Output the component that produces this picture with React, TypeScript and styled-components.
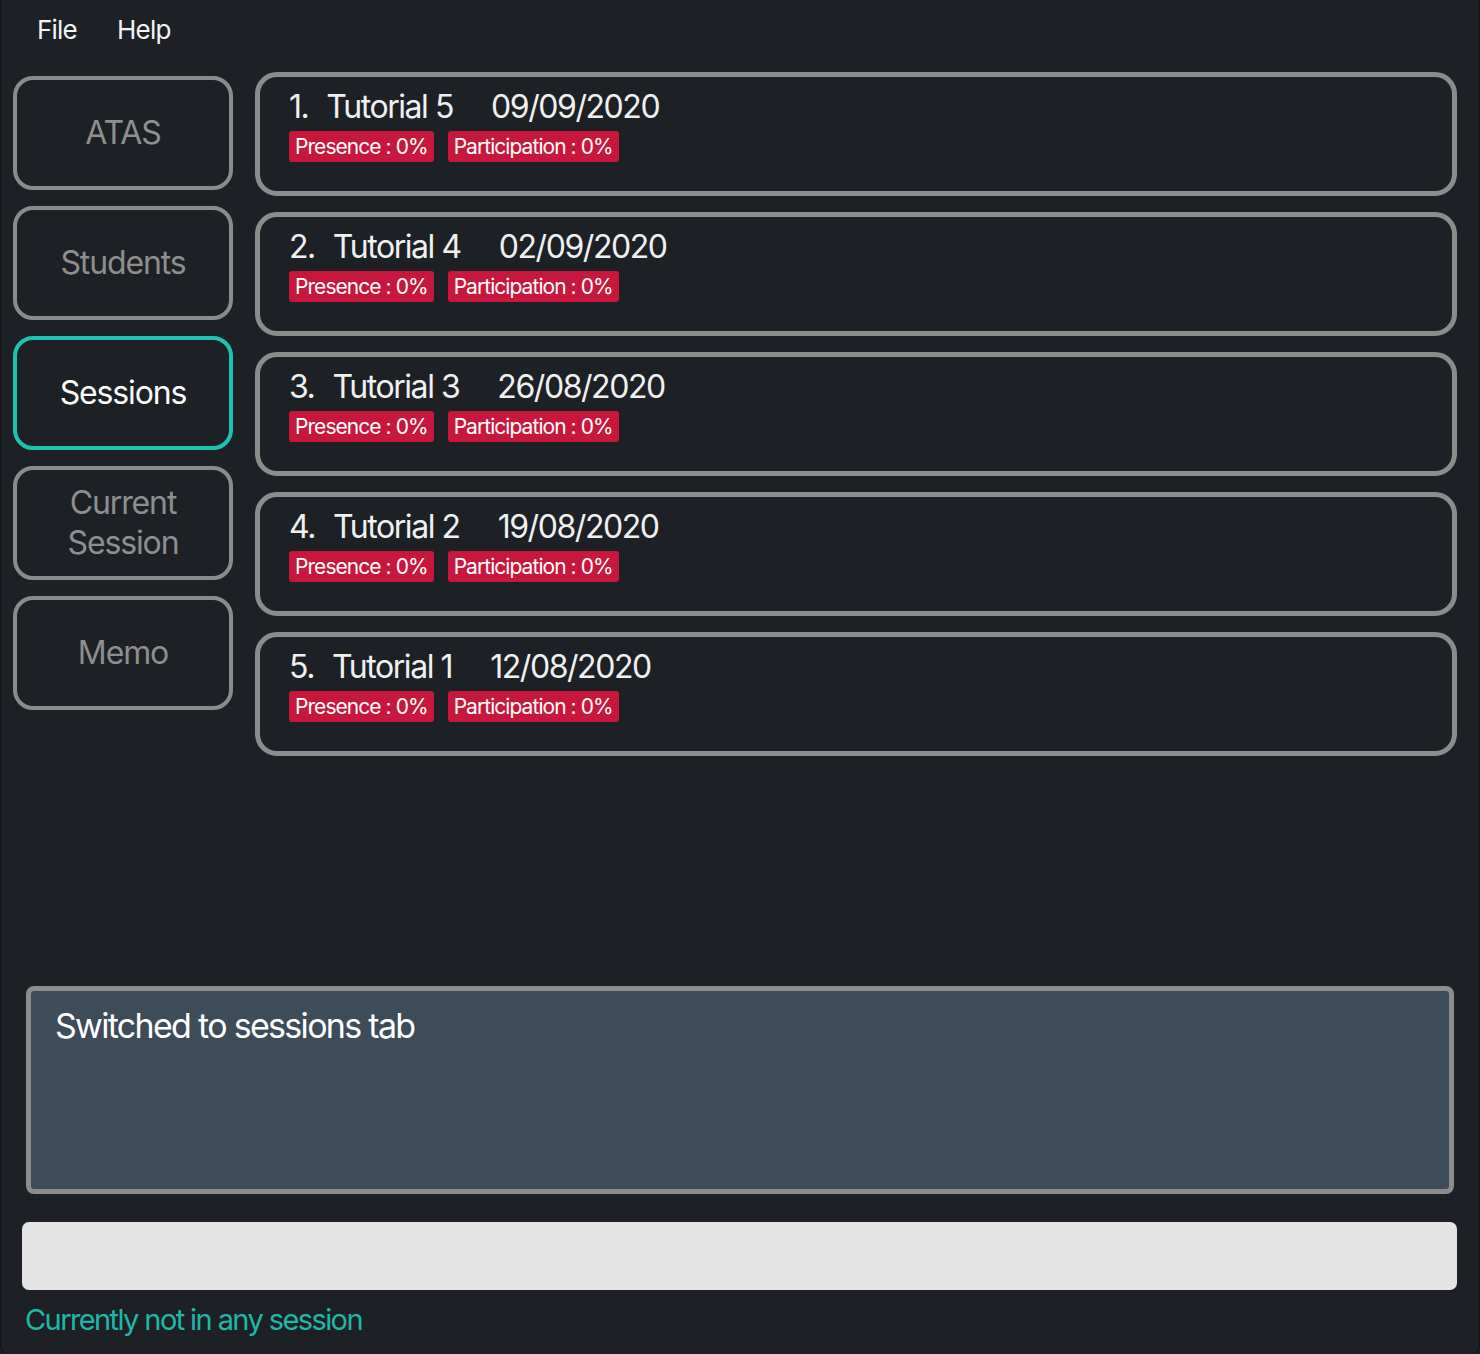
import styled, { createGlobalStyle } from 'styled-components'

const GlobalStyle = createGlobalStyle`
  html, body {
    margin: 0;
    padding: 0;
    background: #1d2126;
  }
  * {
    box-sizing: border-box;
  }
`

const Window = styled.div`
  width: 1480px;
  height: 1354px;
  background: #1d2126;
  font-family: Inter, 'Noto Sans', sans-serif;
  display: flex;
  flex-direction: column;
  border-left: 2px solid #15181b;
  border-right: 2px solid #15181b;
  border-bottom-left-radius: 8px;
  border-bottom-right-radius: 8px;
  overflow: hidden;
`

const MenuBar = styled.div`
  display: flex;
  gap: 40px;
  height: 60px;
  padding: 14px 0 0 35px;
`

const MenuItem = styled.div`
  color: #f2f2f2;
  font-size: 26px;
  letter-spacing: -0.03em;
`

const Main = styled.div`
  display: flex;
  gap: 22px;
  padding: 12px 21px 0 11px;
  height: 926px;
`

const Nav = styled.div`
  display: flex;
  flex-direction: column;
  gap: 16px;
  padding-top: 4px;
  width: 220px;
  flex-shrink: 0;
`

const NavButton = styled.div<{ active?: boolean }>`
  height: 114px;
  border: 4px solid ${(p) => (p.active ? '#1fc2b1' : '#8b8b8b')};
  border-radius: 20px;
  display: flex;
  align-items: center;
  justify-content: center;
  text-align: center;
  color: ${(p) => (p.active ? '#ffffff' : '#8e8e8e')};
  font-size: 32px;
  line-height: 40px;
  letter-spacing: -0.035em;
  padding: 0 10px;
`

const SessionList = styled.div`
  flex: 1;
  display: flex;
  flex-direction: column;
  gap: 16px;
`

const SessionCard = styled.div`
  height: 124px;
  border: 5px solid #8c8c8c;
  border-radius: 22px;
  padding: 10px 0 0 29px;
`

const SessionTitle = styled.div`
  color: #f0f0f0;
  font-size: 32px;
  line-height: 40px;
  letter-spacing: -0.045em;
  display: flex;
  white-space: pre;
`

const SessionName = styled.span`
  margin-left: 18px;
  margin-right: 38px;
`

const Tags = styled.div`
  display: flex;
  gap: 14px;
  margin-top: 4px;
`

const Tag = styled.span`
  background: #c8173c;
  color: #ffffff;
  font-size: 21px;
  line-height: 31px;
  letter-spacing: -0.045em;
  padding: 0 6px;
  border-radius: 3px;
`

const ResultBox = styled.div`
  margin: 0 24px 0 24px;
  height: 208px;
  background: #3e4b58;
  border: 5px solid #8c8c8c;
  border-radius: 8px;
  color: #ffffff;
  font-size: 34px;
  letter-spacing: -0.05em;
  padding: 14px 24px;
`

const CommandBox = styled.div`
  margin: 28px 21px 0 20px;
  height: 68px;
  background: #e4e4e4;
  border-radius: 7px;
`

const StatusBar = styled.div`
  color: #1fb8a7;
  font-size: 29px;
  letter-spacing: -0.055em;
  padding: 12px 0 0 23px;
`

const sessions = [
  { name: 'Tutorial 5', date: '09/09/2020' },
  { name: 'Tutorial 4', date: '02/09/2020' },
  { name: 'Tutorial 3', date: '26/08/2020' },
  { name: 'Tutorial 2', date: '19/08/2020' },
  { name: 'Tutorial 1', date: '12/08/2020' },
]

export default function App() {
  return (
    <>
      <GlobalStyle />
      <Window>
        <MenuBar>
          <MenuItem>File</MenuItem>
          <MenuItem>Help</MenuItem>
        </MenuBar>

        <Main>
          <Nav>
            <NavButton>ATAS</NavButton>
            <NavButton>Students</NavButton>
            <NavButton active>Sessions</NavButton>
            <NavButton>
              Current
              <br />
              Session
            </NavButton>
            <NavButton>Memo</NavButton>
          </Nav>

          <SessionList>
            {sessions.map((s, i) => (
              <SessionCard key={s.name}>
                <SessionTitle>
                  <span>{i + 1}.</span>
                  <SessionName>{s.name}</SessionName>
                  <span>{s.date}</span>
                </SessionTitle>
                <Tags>
                  <Tag>Presence : 0%</Tag>
                  <Tag>Participation : 0%</Tag>
                </Tags>
              </SessionCard>
            ))}
          </SessionList>
        </Main>

        <ResultBox>Switched to sessions tab</ResultBox>
        <CommandBox />
        <StatusBar>Currently not in any session</StatusBar>
      </Window>
    </>
  )
}
